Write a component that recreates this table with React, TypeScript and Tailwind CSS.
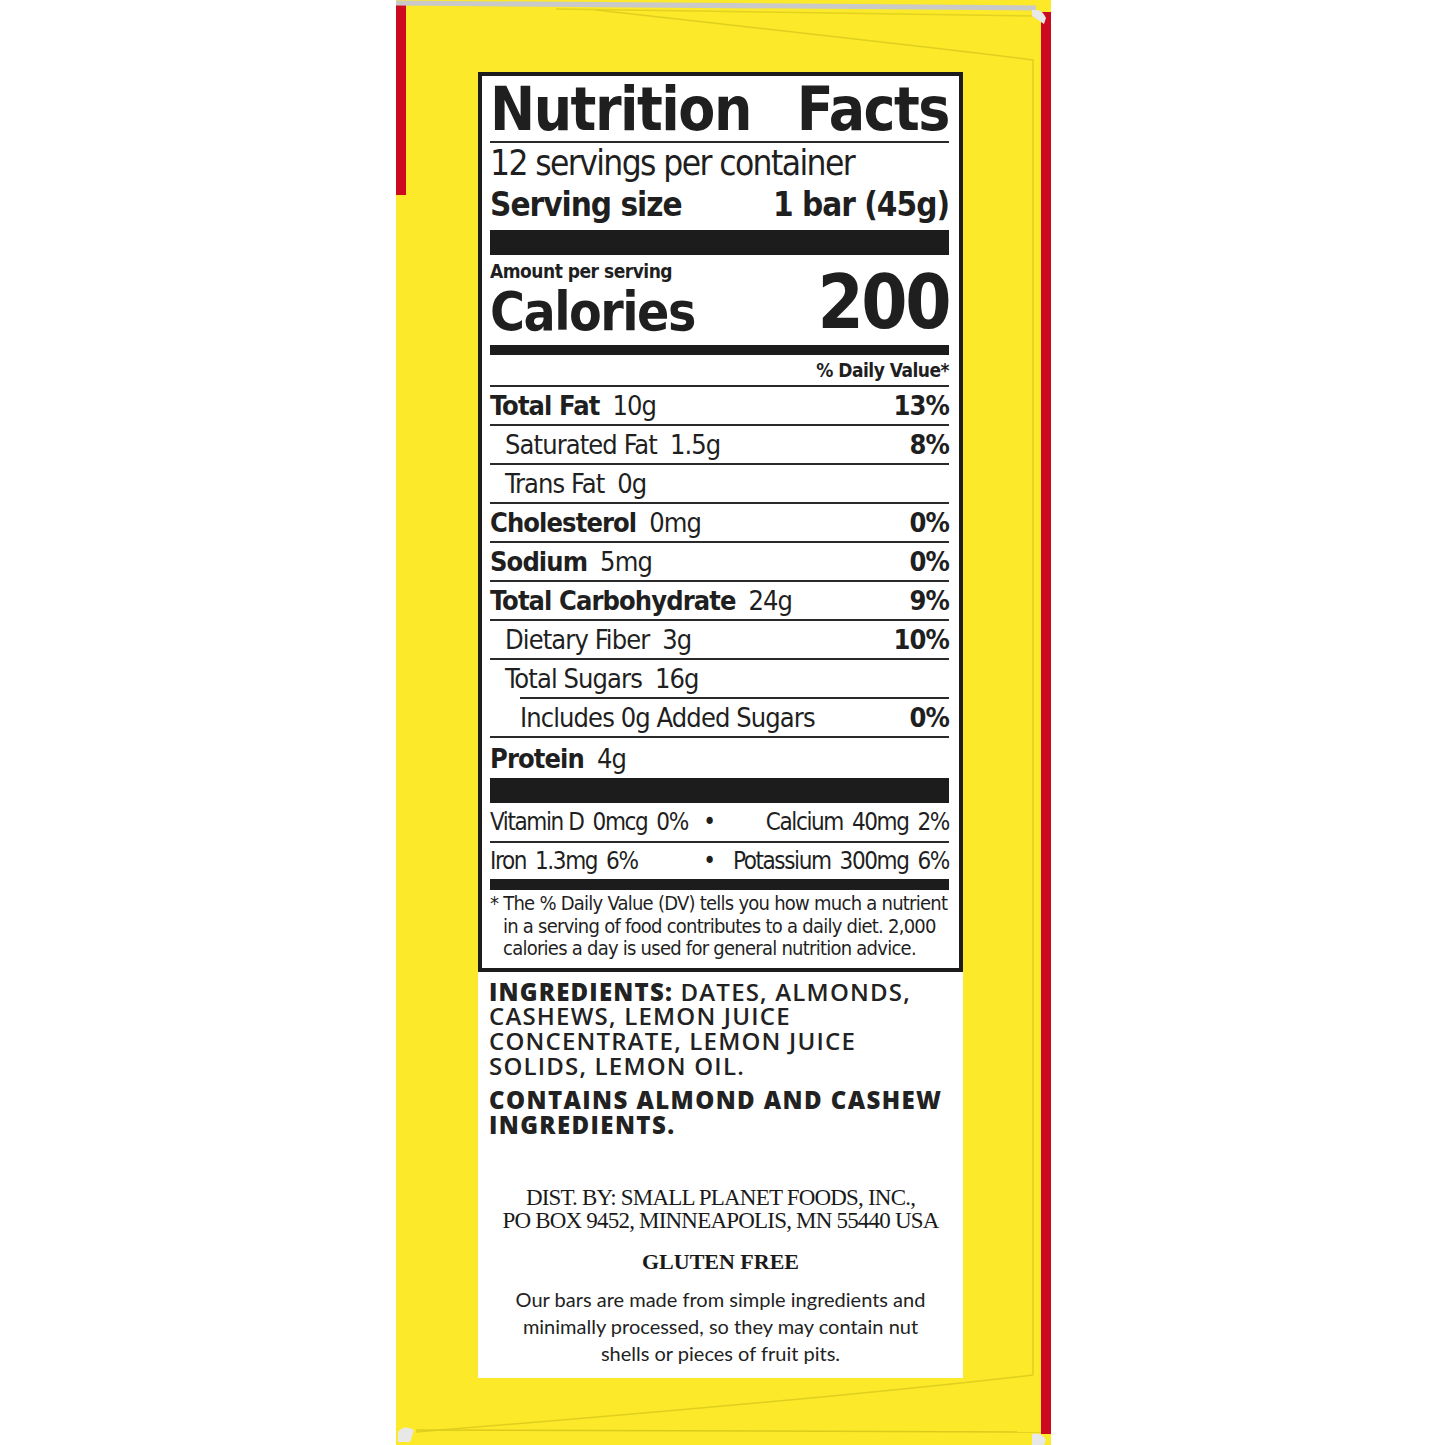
const NARROW = "font-['DejaVu_Sans_Condensed','Liberation_Sans_Narrow','Arial_Narrow',sans-serif]";

type Row = {
  label: string;
  amount: string;
  dv?: string;
  bold?: boolean;
  indent?: number;
  lineIndent?: boolean;
  last?: boolean;
};

const rows: Row[] = [
  { label: "Total Fat", amount: "10g", dv: "13%", bold: true },
  { label: "Saturated Fat", amount: "1.5g", dv: "8%", indent: 1 },
  { label: "Trans Fat", amount: "0g", indent: 1 },
  { label: "Cholesterol", amount: "0mg", dv: "0%", bold: true },
  { label: "Sodium", amount: "5mg", dv: "0%", bold: true },
  { label: "Total Carbohydrate", amount: "24g", dv: "9%", bold: true },
  { label: "Dietary Fiber", amount: "3g", dv: "10%", indent: 1 },
  { label: "Total Sugars", amount: "16g", indent: 1, lineIndent: true },
  { label: "Includes 0g Added Sugars", amount: "", dv: "0%", indent: 2 },
  { label: "Protein", amount: "4g", bold: true, last: true },
];

function NutrientRow({ row }: { row: Row }) {
  return (
    <>
      <div
        className={
          row.last
            ? "flex h-[40px] items-center justify-between whitespace-nowrap text-[27px] leading-none tracking-[-0.9px]"
            : "flex h-[37px] items-center justify-between whitespace-nowrap text-[27px] leading-none tracking-[-0.9px]"
        }
      >
        <div className={row.indent === 2 ? "pl-[30px]" : row.indent === 1 ? "pl-[15px]" : ""}>
          {row.bold ? <span className="font-bold">{row.label}</span> : <span>{row.label}</span>}
          {row.amount && <span className="ml-[13px]">{row.amount}</span>}
        </div>
        {row.dv && <span className="font-bold">{row.dv}</span>}
      </div>
      {!row.last && (
        <div className={row.lineIndent ? "ml-[30px] h-[2px] bg-[#2a2a2a]" : "h-[2px] bg-[#2a2a2a]"} />
      )}
    </>
  );
}

function FoldLines() {
  return (
    <svg className="pointer-events-none absolute inset-0" width="655" height="1445" viewBox="0 0 655 1445">
      <path d="M0 3 L640 8" stroke="#c9c9c9" strokeWidth="5" fill="none" />
      <path d="M160 9 L640 16" stroke="#e3d21f" strokeWidth="1.5" fill="none" />
      <path d="M200 10 Q560 50 637 60 L637 1375" stroke="#e0cf1f" strokeWidth="1.5" fill="none" />
      <path d="M637 1375 Q420 1400 20 1432" stroke="#e0cf1f" strokeWidth="1.5" fill="none" />
      <path d="M20 1430 L645 1432" stroke="#dccb1d" strokeWidth="1.5" fill="none" />
      <path d="M2 1432 Q8 1424 18 1430 L14 1442 L2 1442 Z" fill="#e8e8e8" />
      <path d="M636 10 Q646 8 650 18 L648 24 L636 16 Z" fill="#e8e8e8" />
      <path d="M636 1434 Q646 1432 650 1440 L648 1445 L636 1445 Z" fill="#e8e8e8" />
    </svg>
  );
}

function Parts({ items, className }: { items: string[]; className: string }) {
  return (
    <span className={className}>
      {items.map((t) => (
        <span key={t}>{t}</span>
      ))}
    </span>
  );
}

function MineralRow({ left, right, tall }: { left: string[]; right: string[]; tall?: boolean }) {
  return (
    <div
      className={
        tall
          ? "flex h-[38px] items-center whitespace-nowrap text-[24px] leading-none tracking-[-1.4px]"
          : "flex h-[36px] items-center whitespace-nowrap text-[24px] leading-none tracking-[-1.4px]"
      }
    >
      <Parts items={left} className="flex w-[209px] gap-[9px]" />
      <span className="w-[20px] text-center">•</span>
      <Parts items={right} className="flex flex-1 justify-end gap-[9px]" />
    </div>
  );
}

export default function App() {
  return (
    <div className="flex h-[1445px] w-[1445px] justify-center bg-white pl-[2px]">
      <div className="relative h-[1445px] w-[655px] bg-[#fbe92a] pl-[82px] pt-[72px]">
        <div className="absolute left-0 top-[3px] h-[192px] w-[10px] bg-[#cc0a1f]" />
        <div className="absolute right-0 top-[12px] h-[1422px] w-[10px] bg-[#cc0a1f]" />
        <FoldLines />

        <div className="relative h-[1306px] w-[485px] bg-white">
          {/* Nutrition facts panel */}
          <div className={`border-[4px] border-[#1c1c1c] pl-[8px] pr-[10px] text-[#1f1f1f] ${NARROW}`}>
            <div className="flex h-[65px] items-center justify-between text-[60px] font-bold leading-none tracking-[-1.5px]">
              <span>Nutrition</span>
              <span>Facts</span>
            </div>
            <div className="h-[2px] bg-[#2a2a2a]" />
            <div className="flex h-[41px] items-center whitespace-nowrap text-[35px] leading-none tracking-[-1.6px]">
              12 servings per container
            </div>
            <div className="flex h-[41px] items-center justify-between whitespace-nowrap text-[33px] font-bold leading-none tracking-[-1px]">
              <span>Serving size</span>
              <span>1 bar (45g)</span>
            </div>
            <div className="mt-[5px] h-[25px] bg-[#1c1c1c]" />
            <div className="flex h-[86px] items-end justify-between font-bold leading-none">
              <div>
                <div className="flex h-[26px] items-end text-[19px] tracking-[-0.5px]">Amount per serving</div>
                <div className="flex h-[60px] items-end pb-[3px] text-[53px] tracking-[-1.5px]">Calories</div>
              </div>
              <div className="pb-[2px] text-[74px] tracking-[-2.5px]">200</div>
            </div>
            <div className="mt-[4px] h-[10px] bg-[#1c1c1c]" />
            <div className="flex h-[30px] items-center justify-end text-[19px] font-bold leading-none tracking-[-0.5px]">
              % Daily Value*
            </div>
            <div className="h-[2px] bg-[#2a2a2a]" />
            {rows.map((r) => (
              <NutrientRow key={r.label} row={r} />
            ))}
            <div className="h-[25px] bg-[#1c1c1c]" />
            <MineralRow tall left={["Vitamin D", "0mcg", "0%"]} right={["Calcium", "40mg", "2%"]} />
            <div className="h-[2px] bg-[#2a2a2a]" />
            <MineralRow left={["Iron", "1.3mg", "6%"]} right={["Potassium", "300mg", "6%"]} />
            <div className="h-[11px] bg-[#1c1c1c]" />
            <p className="whitespace-nowrap pb-[8px] pl-[13px] pt-[2px] -indent-[13px] text-[20px] leading-[22.5px] tracking-[-0.75px]">
              * The % Daily Value (DV) tells you how much a nutrient
              <br />
              in a serving of food contributes to a daily diet. 2,000
              <br />
              calories a day is used for general nutrition advice.
            </p>
          </div>

          {/* Ingredients */}
          <div className="whitespace-nowrap px-[11px] pt-[8px] font-['Open_Sans','Liberation_Sans',sans-serif] text-[24px] font-semibold uppercase leading-[24.7px] tracking-[1.2px] text-[#222]">
            <p>
              <span className="font-extrabold">Ingredients:</span> Dates, Almonds,
              <br />
              Cashews, Lemon Juice
              <br />
              Concentrate, Lemon Juice
              <br />
              Solids, Lemon Oil.
            </p>
            <p className="mt-[10px] font-extrabold tracking-[1.4px]">
              Contains Almond and Cashew
              <br />
              Ingredients.
            </p>
          </div>

          {/* Distribution */}
          <div className="mt-[48px] text-center font-['Liberation_Serif','DejaVu_Serif',serif] text-[#1a1a1a]">
            <p className="whitespace-nowrap text-[23px] leading-[23px] tracking-[-0.8px]">
              DIST. BY: SMALL PLANET FOODS, INC.,
              <br />
              PO BOX 9452, MINNEAPOLIS, MN 55440 USA
            </p>
            <p className="mt-[18px] text-[22px] font-bold leading-[24px]">GLUTEN FREE</p>
          </div>
          <p className="mt-[12px] px-[20px] text-center font-['Lato','Open_Sans',sans-serif] text-[20px] leading-[27px] text-[#222]">
            Our bars are made from simple ingredients and minimally processed, so they may contain nut shells or pieces of fruit pits.
          </p>
        </div>
      </div>
    </div>
  );
}
